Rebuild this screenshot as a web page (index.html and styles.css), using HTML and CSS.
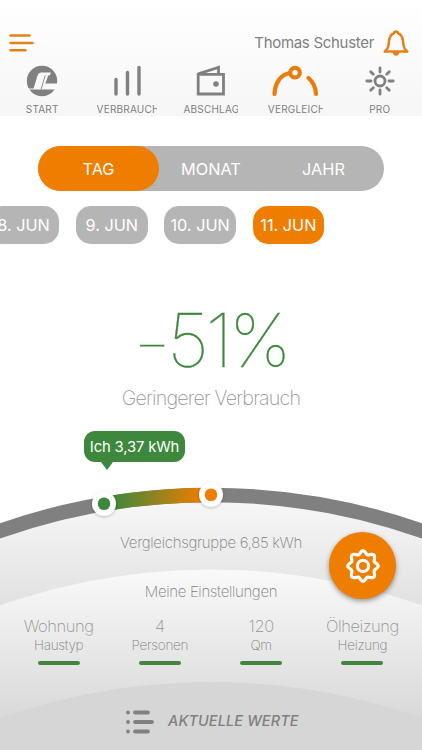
FILE: index.html
```
<!DOCTYPE html>
<html lang="de">
<head>
<meta charset="utf-8">
<title>Vergleich</title>
<link rel="stylesheet" href="styles.css">
</head>

<body>

<div class="header">
	<div class="topbar">
		<svg class="burger" width="26" height="20" viewBox="0 0 26 20">
			<path d="M2.500 2.500H21.500M2.500 10H24.500M2.500 17.300H17.500"/>
		</svg>
		<span class="user">Thomas Schuster</span>
		<svg class="bell" width="28" height="28" viewBox="0 0 28 28">
			<path d="M2.700 22.600C5.500 20.500 6.500 18 6.800 14C7.100 8.500 8.500 5.200 12 4.300Q12.200 2.500 14 2.500Q15.800 2.500 16 4.300C19.500 5.200 20.900 8.500 21.200 14C21.500 18 22.500 20.500 25.300 22.600Z"/>
			<path class="fill" d="M10.500 23H17.500Q17 26.700 14 26.700Q11 26.700 10.500 23Z"/>
		</svg>
	</div>
	<div class="tabs">
		<div class="tab">
			<svg width="32" height="32" viewBox="0 0 32 32">
				<circle class="fill" cx="16" cy="16" r="15.200"/>
				<path class="cut" d="M2 23.500H7.600L11.200 11.500Q12.300 7.400 15.500 7.400H25L23.800 10.300H22.300L19.300 18.500H32V24.500H2Z"/>
				<path class="mark" d="M19.200 10.500L15 24.500"/>
			</svg>
			<span class="label">START</span>
		</div>
		<div class="tab">
			<svg width="32" height="32" viewBox="0 0 32 32">
				<path class="bars" d="M5 14.500V29M16.500 7.500V29M28 2.500V29"/>
			</svg>
			<span class="label">VERBRAUCH</span>
		</div>
		<div class="tab">
			<svg width="32" height="32" viewBox="0 0 32 32">
				<path class="line" d="M3.200 9.300H28.500V29H3.200ZM3.200 8.800L23.500 2.500V9"/>
				<circle class="fill" cx="21" cy="19" r="2.800"/>
			</svg>
			<span class="label narrow">ABSCHLAG</span>
		</div>
		<div class="tab active">
			<svg width="48" height="32" viewBox="0 0 48 32">
				<path class="arc" d="M3.500 29C4 18 9.500 9.500 19 8M37.500 13Q44.500 19 45 29"/>
				<circle class="ring" cx="24" cy="7.700" r="4.800"/>
			</svg>
			<span class="label narrow">VERGLEICH</span>
		</div>
		<div class="tab">
			<svg width="32" height="32" viewBox="0 0 32 32">
				<circle class="line" cx="16" cy="16" r="5"/>
				<path class="line round" d="M16 2.800V7M16 25V29.200M2.800 16H7M25 16H29.200M6.700 6.700L9.300 9.300M22.700 22.700L25.300 25.300M25.300 6.700L22.700 9.300M9.300 22.700L6.700 25.300"/>
			</svg>
			<span class="label">PRO</span>
		</div>
	</div>
</div>

<div class="period">
	<span class="on">TAG</span>
	<span>MONAT</span>
	<span class="last">JAHR</span>
</div>

<div class="days">
	<span>8. JUN</span>
	<span>9. JUN</span>
	<span>10. JUN</span>
	<span class="on">11. JUN</span>
</div>

<div class="result">
	<div class="percent"><span class="minus">−</span>51%</div>
	<div class="hint">Geringerer Verbrauch</div>
</div>

<div class="gauge">
	<svg class="scale" width="422" height="330" viewBox="0 420 422 330">
		<defs>
			<linearGradient id="outer" gradientUnits="userSpaceOnUse" x1="0" y1="495" x2="0" y2="620">
				<stop offset="0" stop-color="#f8f8f8"/>
				<stop offset="1" stop-color="#dedede"/>
			</linearGradient>
			<linearGradient id="inner" gradientUnits="userSpaceOnUse" x1="0" y1="570" x2="0" y2="718">
				<stop offset="0" stop-color="#f9f9f9"/>
				<stop offset="1" stop-color="#d9d9d9"/>
			</linearGradient>
			<linearGradient id="diff" gradientUnits="userSpaceOnUse" x1="112" y1="0" x2="203" y2="0">
				<stop offset="0" stop-color="#3d883d"/>
				<stop offset="1" stop-color="#ef7d00"/>
			</linearGradient>
			<filter id="shadow" x="-50%" y="-50%" width="200%" height="200%">
				<feDropShadow dx="0" dy="1" stdDeviation="1.500" flood-opacity="0.25"/>
			</filter>
		</defs>
		<circle cx="211" cy="1133" r="638" fill="url(#outer)"/>
		<circle cx="211" cy="1208" r="638.500" fill="url(#inner)"/>
		<circle cx="211" cy="1320" r="638" fill="#d6d6d6"/>
		<circle class="track" cx="211" cy="1133" r="638"/>
		<path class="diff" d="M104 504A638 638 0 0 1 211 495"/>
		<circle class="knob" cx="104" cy="503.700" r="12"/>
		<circle class="me" cx="104" cy="503.700" r="6.300"/>
		<circle class="knob" cx="211" cy="494.700" r="12"/>
		<circle class="group" cx="211" cy="494.700" r="6.300"/>
	</svg>
	<div class="bubble">Ich 3,37 kWh</div>
	<div class="average">Vergleichsgruppe 6,85 kWh</div>
	<div class="title">Meine Einstellungen</div>
	<div class="settings">
		<div class="item"><span class="value">Wohnung</span><span class="name">Haustyp</span></div>
		<div class="item"><span class="value">4</span><span class="name">Personen</span></div>
		<div class="item"><span class="value">120</span><span class="name">Qm</span></div>
		<div class="item"><span class="value">Ölheizung</span><span class="name">Heizung</span></div>
	</div>
	<div class="current">
		<svg width="30" height="24" viewBox="0 0 30 24">
			<path d="M3 2.500H3.010M10 2.500H23M3 12H3.010M10 12H27M3 21.500H3.010M10 21.500H23"/>
		</svg>
		<span>AKTUELLE WERTE</span>
	</div>
	<div class="gear">
		<svg width="36" height="36" viewBox="-18 -18 36 36">
			<path d="M0 -15.500Q1 -15.500 2 -14L3.700 -11.700Q4.300 -10.900 5.300 -11.100L8.600 -11.600Q11.600 -11.900 11.600 -8.600L11.100 -5.300Q10.900 -4.300 11.700 -3.700L14 -2Q16.500 0 14 2L11.700 3.700Q10.900 4.300 11.100 5.300L11.600 8.600Q11.600 11.900 8.600 11.600L5.300 11.100Q4.300 10.900 3.700 11.700L2 14Q0 16.500 -2 14L-3.700 11.700Q-4.300 10.900 -5.300 11.100L-8.600 11.600Q-11.900 11.600 -11.600 8.600L-11.100 5.300Q-10.900 4.300 -11.700 3.700L-14 2Q-16.500 0 -14 -2L-11.700 -3.700Q-10.900 -4.300 -11.100 -5.300L-11.600 -8.600Q-11.600 -11.900 -8.600 -11.600L-5.300 -11.100Q-4.300 -10.900 -3.700 -11.700L-2 -14Q-1 -15.500 0 -15.500Z"/>
			<circle r="5.600"/>
		</svg>
	</div>
</div>

</body>
</html>
```
FILE: styles.css
```
body {
	margin: 0;
	width: 422px;
	height: 750px;
	overflow: hidden;
	background-color: #fff;
	font-family: Inter, "Liberation Sans", sans-serif;
	color: #808080;
}

svg {
	display: block;
	flex: none;
}

/* Kopfzeile */
.header {
	height: 116px;
	background: linear-gradient(#fff, #f6f6f6);
}

.topbar {
	display: flex;
	align-items: center;
	padding: 28px 12px 0 8px;
	height: 30px;
}

.burger, .bell {
	fill: none;
	stroke: #e57f17;
	stroke-width: 2.5;
	stroke-linecap: round;
	stroke-linejoin: round;
}

.bell .fill {
	fill: #e57f17;
	stroke: none;
}

.user {
	margin-left: auto;
	margin-right: 8px;
	font-size: 15px;
	line-height: 26px;
	letter-spacing: -0.3px;
}

.tabs {
	display: flex;
	padding-top: 7px;
}

.tab {
	width: 84.4px;
	display: flex;
	flex-direction: column;
	align-items: center;
	fill: none;
	stroke: #808080;
}

.tab .fill {
	fill: #808080;
	stroke: none;
}

.tab .cut {
	fill: #f8f8f8;
	stroke: none;
}

.tab .mark {
	stroke-width: 0.9;
}

.tab .bars {
	stroke-width: 3.4;
	stroke-linecap: round;
}

.tab .line {
	stroke-width: 2.8;
}

.tab .round {
	stroke-linecap: round;
}

.active {
	stroke: #e87d0c;
}

.active .arc, .active .ring {
	stroke-width: 4.2;
	stroke-linecap: round;
}

.label {
	max-width: 60px;
	overflow: hidden;
	white-space: nowrap;
	margin-top: 5px;
	font-size: 10px;
	line-height: 14px;
	letter-spacing: 0.2px;
}

.narrow {
	max-width: 55px;
}

/* Zeitraum */
.period {
	display: flex;
	width: 346px;
	height: 45px;
	margin: 30px 0 0 38px;
	border-radius: 23px;
	background-color: #b5b5b5;
}

.period span {
	flex: 1;
	text-align: center;
	color: #fff;
	font-size: 16.3px;
	line-height: 46px;
}

.period .last {
	flex: 0 0 121px;
}

.period .on {
	flex: 0 0 121px;
	border-radius: 23px;
	background-color: #ef7d00;
}

.days {
	display: flex;
	gap: 16.6px;
	margin: 15px 0 0 -12.3px;
}

.days span {
	width: 71.7px;
	height: 38px;
	border-radius: 15px;
	background-color: #b5b5b5;
	color: #fff;
	text-align: center;
	font-size: 16.3px;
	line-height: 38px;
}

.days .on {
	background-color: #ef7d00;
}

.result {
	height: 176px;
	padding-top: 56px;
	box-sizing: border-box;
	text-align: center;
}

.percent {
	font-size: 74px;
	font-weight: 100;
	line-height: 80px;
	letter-spacing: -3.5px;
	color: #3d883d;
	-webkit-text-stroke: 0.3px #3d883d;
}

.minus {
	font-size: 58px;
	line-height: 1;
	vertical-align: 5px;
}

.hint {
	margin-top: 6px;
	font-size: 19.7px;
	font-weight: 200;
	line-height: 24px;
	letter-spacing: -0.8px;
	color: #959595;
}

/* Skala mit Vergleichsgruppe */
.gauge {
	position: relative;
	height: 330px;
	text-align: center;
}

.scale {
	position: absolute;
	top: 0;
	left: 0;
}

.track, .diff {
	fill: none;
	stroke: #808080;
	stroke-width: 14.5;
}

.diff {
	stroke: url(#diff);
}

.knob {
	fill: #fff;
	filter: url(#shadow);
}

.me {
	fill: #3d883d;
}

.group {
	fill: #ef7d00;
}

.bubble {
	position: absolute;
	left: 84px;
	top: 11px;
	width: 101px;
	height: 31px;
	border-radius: 11px;
	background-color: #3d883d;
	color: #fff;
	font-size: 14.8px;
	line-height: 33px;
	letter-spacing: -0.15px;
	white-space: nowrap;
}

.bubble::after {
	content: "";
	position: absolute;
	left: 17px;
	top: 31px;
	border: 6.5px solid transparent;
	border-top: 8.5px solid #3d883d;
	border-bottom: 0;
}

.average, .title, .settings, .current {
	position: relative;
}

.average {
	padding-top: 113px;
	font-size: 15px;
	font-weight: 200;
	line-height: 20px;
	letter-spacing: -0.3px;
}

.title {
	margin-top: 29px;
	font-size: 15px;
	font-weight: 200;
	line-height: 20px;
	letter-spacing: -0.35px;
}

.settings {
	display: flex;
	padding: 14px 9px 0 8px;
}

.item {
	flex: 1;
	display: flex;
	flex-direction: column;
	align-items: center;
}

.value {
	font-size: 16.5px;
	font-weight: 200;
	line-height: 20px;
	letter-spacing: -0.45px;
	color: #959595;
}

.name {
	font-size: 13.5px;
	font-weight: 200;
	line-height: 18px;
	letter-spacing: -0.3px;
}

.item::after {
	content: "";
	width: 42px;
	height: 4px;
	margin-top: 7px;
	border-radius: 2px;
	background-color: #43853f;
}

.current {
	display: flex;
	align-items: center;
	margin: 43px 0 0 125px;
	font-size: 14.5px;
	font-style: italic;
	font-weight: 500;
	line-height: 22px;
	letter-spacing: 0.1px;
}

.current svg {
	margin: 2px 13px 0 0;
	fill: none;
	stroke: #808080;
	stroke-width: 3.8;
	stroke-linecap: round;
}

.gear {
	position: absolute;
	left: 329px;
	top: 112px;
	width: 67px;
	height: 67px;
	display: flex;
	align-items: center;
	justify-content: center;
	border-radius: 50%;
	background-color: #ef7d00;
	box-shadow: 0 2px 5px rgba(0, 0, 0, 0.4);
}

.gear svg {
	fill: none;
	stroke: #fff;
	stroke-width: 3.2;
}
```
